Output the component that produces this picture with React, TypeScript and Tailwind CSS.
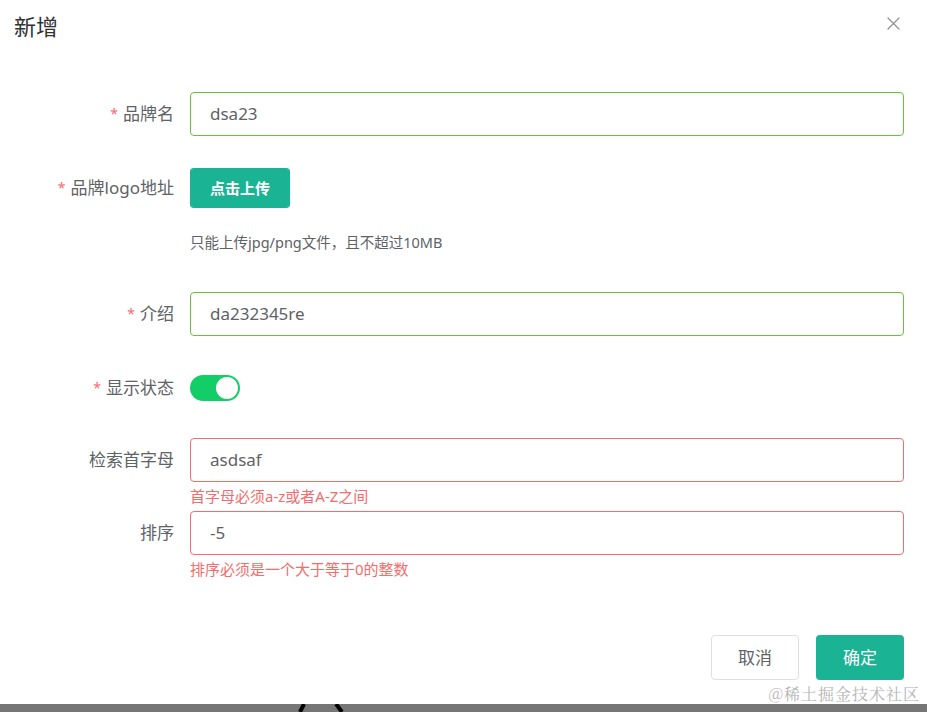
import React from "react";

const font = { fontFamily: '"Noto Sans", "Noto Sans CJK SC", sans-serif' };

function Star() {
  return <span className="text-[#f56c6c] text-[14px] mr-[5px] align-[1px]">*</span>;
}

function Label({ text, required }: { text: string; required?: boolean }) {
  return (
    <div className="w-[174px] shrink-0 text-right text-[17px] text-[#606266] leading-[44px]">
      {required && <Star />}
      {text}
    </div>
  );
}

function TextInput({ value, tone }: { value: string; tone: "ok" | "error" }) {
  return (
    <div
      className={`flex-1 h-[44px] rounded-[4px] border px-[19px] flex items-center text-[17px] text-[#606266] ${
        tone === "ok" ? "border-[#67c23a]" : "border-[#f56c6c]"
      }`}
    >
      {value}
    </div>
  );
}

export default function App() {
  return (
    <div className="w-[927px] h-[712px] bg-white relative overflow-hidden" style={font}>
      {/* Header */}
      <div className="h-[52px] flex items-start justify-between pl-[14px] pr-[27px]">
        <h2 className="mt-[15px] text-[22px] text-[#303133] leading-[22px]">新增</h2>
        <button aria-label="关闭" className="mt-[16px] w-[14px] h-[14px] flex items-center justify-center">
          <svg width="13" height="13" viewBox="0 0 13 13" fill="none">
            <path d="M1 1L12 12M12 1L1 12" stroke="#909399" strokeWidth="1.3" strokeLinecap="round" />
          </svg>
        </button>
      </div>

      {/* Form */}
      <div className="mt-[40px] pr-[23px]">
        <div className="flex">
          <Label text="品牌名" required />
          <div className="ml-[16px] flex-1 flex">
            <TextInput value="dsa23" tone="ok" />
          </div>
        </div>

        <div className="flex mt-[32px]">
          <div className="w-[174px] shrink-0 text-right text-[17px] text-[#606266] leading-[40px]">
            <Star />品牌logo地址
          </div>
          <div className="ml-[16px] flex-1">
            <button className="w-[100px] h-[40px] rounded-[4px] bg-[#1ab394] text-white text-[15px] font-semibold">
              点击上传
            </button>
            <div className="mt-[22px] text-[14.5px] leading-[24px] text-[#606266]">
              只能上传jpg/png文件，且不超过10MB
            </div>
          </div>
        </div>

        <div className="flex mt-[38px]">
          <Label text="介绍" required />
          <div className="ml-[16px] flex-1 flex">
            <TextInput value="da232345re" tone="ok" />
          </div>
        </div>

        <div className="flex mt-[30px] h-[44px] items-center">
          <Label text="显示状态" required />
          <div className="ml-[16px]">
            <div className="w-[50px] h-[26px] rounded-full bg-[#13ce66] relative">
              <div className="absolute right-[2px] top-[2px] w-[22px] h-[22px] rounded-full bg-white" />
            </div>
          </div>
        </div>

        <div className="flex mt-[28px]">
          <Label text="检索首字母" />
          <div className="ml-[16px] flex-1">
            <div className="flex">
              <TextInput value="asdsaf" tone="error" />
            </div>
            <div className="mt-[4px] text-[15px] leading-[20px] text-[#f56c6c]">首字母必须a-z或者A-Z之间</div>
          </div>
        </div>

        <div className="flex mt-[5px]">
          <Label text="排序" />
          <div className="ml-[16px] flex-1">
            <div className="flex">
              <TextInput value="-5" tone="error" />
            </div>
            <div className="mt-[4px] text-[15px] leading-[20px] text-[#f56c6c]">排序必须是一个大于等于0的整数</div>
          </div>
        </div>
      </div>

      {/* Footer */}
      <div className="mt-[56px] pr-[23px] flex justify-end gap-[17px]">
        <button className="w-[88px] h-[45px] rounded-[4px] border border-[#dcdfe6] bg-white text-[17px] text-[#606266]">
          取消
        </button>
        <button className="w-[88px] h-[45px] rounded-[4px] bg-[#1ab394] text-[17px] text-white">确定</button>
      </div>

      {/* Watermark */}
      <div
        className="absolute right-[7px] top-[682px] text-[16px] leading-[24px] text-[#b5b5b5] tracking-[1px]"
        style={{ fontFamily: '"Noto Serif CJK SC", "Noto Sans CJK SC", serif' }}
      >
        @稀土掘金技术社区
      </div>

      {/* Backdrop strip */}
      <div className="absolute left-0 bottom-0 w-full h-[8px] bg-[#767676]">
        <svg className="absolute left-[296px] top-0" width="52" height="8" viewBox="0 0 52 8" fill="none">
          <path d="M8 0 L4 8" stroke="#000" strokeWidth="4" />
          <path d="M40 0 L46 8" stroke="#000" strokeWidth="4" />
        </svg>
      </div>
    </div>
  );
}
